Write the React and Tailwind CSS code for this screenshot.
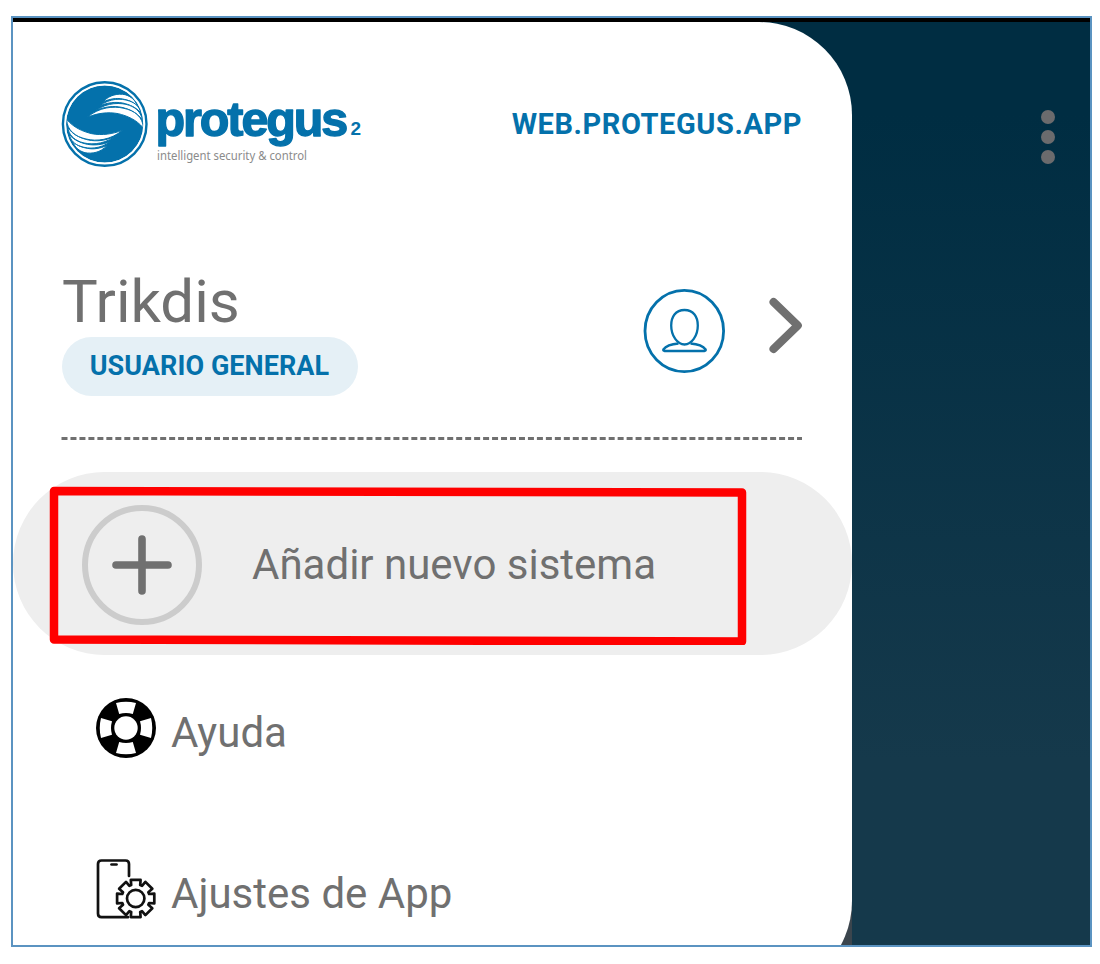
import React from "react";

function Feathers() {
  return (
    <g fill="#fff" stroke="#0471ab" strokeWidth="3">
      <path d="M160 95 C178 74 205 70 225 74 C243 79 256 90 262 108 C250 95 235 90 218 87 C198 83 180 87 160 95Z" />
      <path d="M149 107 C180 85 213 84 238 93 C256 99 268 110 272 128 C258 112 240 104 218 99 C195 95 173 98 149 107Z" />
      <path d="M138 121 C172 97 213 97 238 106 C260 114 273 128 277 150 C262 128 240 118 215 112 C190 107 165 110 138 121Z" />
      <path d="M113 141 C147 112 190 107 222 115 C254 122 279 141 280 174 C258 148 232 138 205 131 C172 125 143 130 113 141Z" />
    </g>
  );
}

function BrandMark() {
  return (
    <svg width="304" height="92" viewBox="0 0 304 92" className="block shrink-0" aria-label="protegus2">
      <circle cx="43.700" cy="46" r="38.800" fill="#0471ab" />
      <g transform="translate(-11 -8) scale(0.33333)">
        <Feathers />
        <g transform="rotate(180 165 161)">
          <Feathers />
        </g>
      </g>
      <circle cx="43.700" cy="46" r="39.600" fill="none" stroke="#fff" strokeWidth="2" />
      <circle cx="43.700" cy="46" r="41.800" fill="none" stroke="#0471ab" strokeWidth="2.4" />
      <text
        x="94.500"
        y="57.500"
        letterSpacing="-2.100"
        fontFamily="Liberation Sans, sans-serif"
        fontWeight="700"
        fontSize="48.500"
        fill="#0471ab"
        stroke="#0471ab"
        strokeWidth="1.4"
        strokeLinejoin="round"
      >
        protegus
      </text>
      <text
        x="289.500"
        y="57"
        fontFamily="Liberation Sans, sans-serif"
        fontWeight="700"
        fontSize="19"
        fill="#0471ab"
      >
        2
      </text>
      <text
        x="96"
        y="82"
        textLength="150"
        lengthAdjust="spacingAndGlyphs"
        fontFamily="Noto Sans, sans-serif"
        fontSize="12.300"
        fill="#8b8b8b"
      >
        intelligent security &amp; control
      </text>
    </svg>
  );
}

function UserIcon() {
  return (
    <svg width="84" height="86" viewBox="0 0 84 86" className="block" fill="none" stroke="#0471ab">
      <ellipse cx="42.300" cy="43" rx="39.300" ry="40.700" strokeWidth="2.8" />
      <path d="M42.500 22 C33.500 22 29.200 29 29.200 37.500 C29.200 48 35.500 56.500 42.500 56.500 C49.500 56.500 55.800 48 55.800 37.500 C55.800 29 51.500 22 42.500 22Z" strokeWidth="2.300" />
      <path d="M36.500 55.500 C29.500 56 23.500 58.500 21.300 61.500 Q21 63 22.500 63 H62.500 Q64 63 63.700 61.500 C61.500 58.500 55.500 56 48.500 55.500" strokeWidth="2.300" />
    </svg>
  );
}

function ChevronIcon() {
  return (
    <svg width="36" height="60" viewBox="0 0 36 60" className="block" fill="none" stroke="#707070" strokeWidth="8" strokeLinecap="round" strokeLinejoin="round">
      <path d="M5.500 6 L29.800 29.500 L5.500 53" />
    </svg>
  );
}

function PlusIcon() {
  return (
    <svg width="120" height="120" viewBox="0 0 120 120" className="block" fill="none">
      <circle cx="60" cy="60" r="57" stroke="#ccc" strokeWidth="6" />
      <path d="M60 34 V86 M34 60 H86" stroke="#707070" strokeWidth="7.600" strokeLinecap="round" />
    </svg>
  );
}

function LifebuoyIcon() {
  const pad = "M-10 -25 Q0 -27.500 10 -25 L6.800 -14 Q0 -16 -6.800 -14Z";
  return (
    <svg width="60" height="60" viewBox="-30 -30 60 60" className="block">
      <circle r="30" fill="#000" />
      <circle r="11.700" fill="#fff" />
      {[0, 90, 180, 270].map((a) => (
        <path key={a} d={pad} fill="#fff" transform={`rotate(${a})`} />
      ))}
    </svg>
  );
}

function PhoneGearIcon() {
  const points = [];
  for (let i = 0; i < 8; i++) {
    const t = (i * Math.PI) / 4;
    for (const [x, y] of [[-4.5, -13.4], [-4.9, -18.6], [4.9, -18.6], [4.5, -13.4]]) {
      points.push(`${(x * Math.cos(t) - y * Math.sin(t)).toFixed(2)},${(x * Math.sin(t) + y * Math.cos(t)).toFixed(2)}`);
    }
  }
  return (
    <svg width="62" height="62" viewBox="0 0 62 62" className="block" fill="none" stroke="#111" strokeWidth="2.700">
      <path d="M33 17 V5 Q33 1.500 29.500 1.500 H5.500 Q2 1.500 2 5 V54.500 Q2 58.200 5.500 58.200 H32" strokeLinecap="round" />
      <path d="M15.500 5.500 H20.500" strokeLinecap="round" />
      <g transform="translate(39.700 39.500)">
        <polygon points={points.join(" ")} fill="#fff" strokeLinejoin="round" />
        <circle r="8.700" />
      </g>
    </svg>
  );
}

export default function App() {
  return (
    <div className="h-[964px] w-[1100px] overflow-hidden bg-white pl-[11px] pt-4 font-[Roboto,sans-serif] text-[#707070]">
      <div className="flex h-[931px] w-[1081px] flex-col overflow-hidden border-2 border-[#5b93c1] bg-white">
        <div className="h-1 shrink-0 bg-black" />
        <div className="flex min-h-0 flex-1 bg-linear-to-b from-[#002d42] from-10% to-[#15394b] to-80%">
          <div className="h-full w-[839px] shrink-0 bg-linear-to-b from-[#002d42] from-50% to-[#3b454d] to-50%">
            <div className="flex h-[972px] w-[839px] flex-col rounded-r-[93px] bg-white">
              <header className="flex h-[102px] items-end justify-between pl-12 pr-[50px] pt-[56px]">
                <div className="-mb-[46px]">
                  <BrandMark />
                </div>
                <a className="-mb-[20px] whitespace-nowrap text-[29px] font-bold leading-[40px] tracking-[0.57px] text-[#0471ab]">
                  WEB.PROTEGUS.APP
                </a>
              </header>
              <section className="flex h-[313px] items-start justify-between pl-12 pr-[48px] pt-[143px]">
                <div>
                  <h1 className="pl-px text-[60px] leading-[70px]">Trikdis</h1>
                  <div className="ml-px flex h-[59px] w-[296px] items-center justify-center rounded-full bg-[#e5f0f6] pb-px pr-px text-[27px] font-bold tracking-[0.07px] text-[#0471ab]">
                    USUARIO GENERAL
                  </div>
                </div>
                <div className="flex items-start gap-[42px] pt-[21px]">
                  <UserIcon />
                  <div className="pt-2">
                    <ChevronIcon />
                  </div>
                </div>
              </section>
              <svg width="741" height="3" className="ml-[48px] block shrink-0" viewBox="0 0 741 3">
                <path d="M0.500 1.500 H741" stroke="#707070" strokeWidth="3" strokeDasharray="6 2.970" />
              </svg>
              <div className="relative mt-[32px] flex h-[183px] shrink-0 items-center gap-[50px] rounded-[92px] bg-[#eee] pl-[69px] pt-[2px]">
                <PlusIcon />
                <span className="whitespace-nowrap text-[42px] leading-[60px]">Añadir nuevo sistema</span>
                <svg width="698" height="160" viewBox="0 0 698 160" className="absolute left-[36px] top-[13px]">
                  <path d="M5 6 L693 7.500 V156.500 L5 154.500Z" fill="none" stroke="#f00" strokeWidth="8.500" strokeLinejoin="round" />
                </svg>
              </div>
              <div className="mt-[43px] flex h-[60px] shrink-0 items-center gap-[15px] pl-[83px]">
                <LifebuoyIcon />
                <span className="pt-[9px] text-[42px] leading-[50px]">Ayuda</span>
              </div>
              <div className="mt-[101px] flex h-[62px] shrink-0 items-center gap-[13px] pl-[83px]">
                <PhoneGearIcon />
                <span className="pt-[8px] text-[42px] leading-[50px]">Ajustes de App</span>
              </div>
            </div>
          </div>
          <div className="flex flex-1 flex-col items-end gap-[6px] pr-[35px] pt-[88px]">
            <span className="size-[14px] rounded-full bg-[#6b6b6d]" />
            <span className="size-[14px] rounded-full bg-[#6b6b6d]" />
            <span className="size-[14px] rounded-full bg-[#6b6b6d]" />
          </div>
        </div>
      </div>
    </div>
  );
}
